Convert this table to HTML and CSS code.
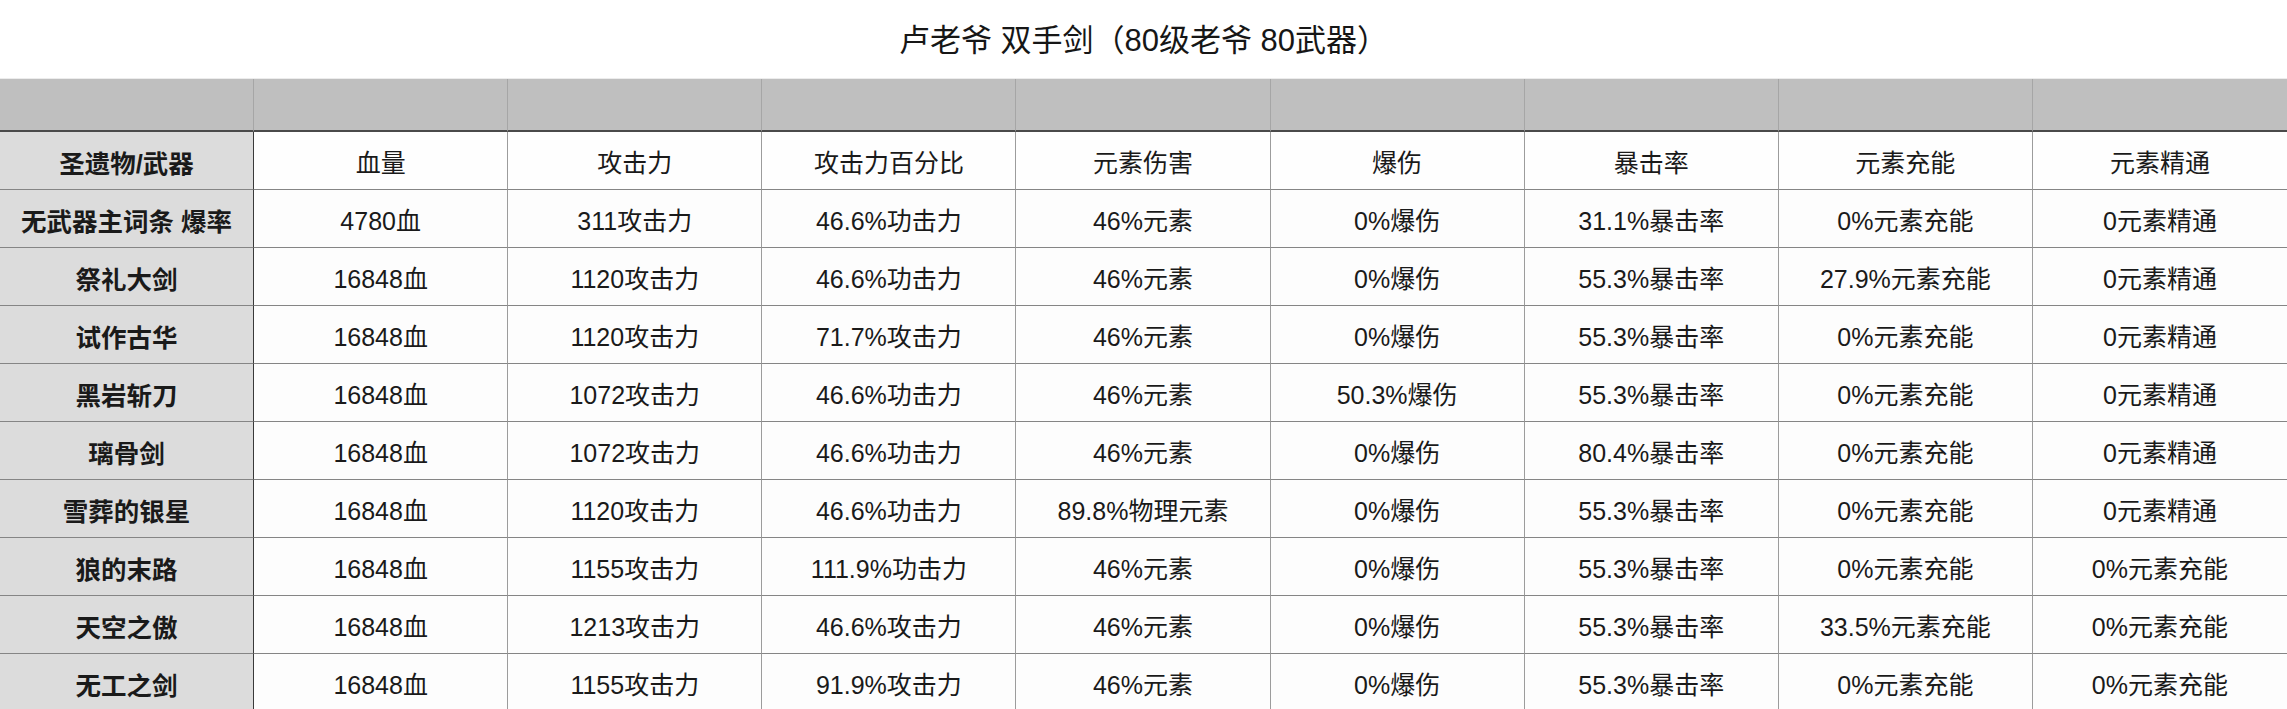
FILE: index.html
```html
<!DOCTYPE html>
<html lang="zh-CN">
<head>
<meta charset="utf-8">
<title>卢老爷 双手剑</title>
<link rel="stylesheet" href="styles.css">
</head>
<body>
<div class="page">
  <h1 class="title">卢老爷 双手剑（80级老爷 80武器）</h1>
  <div class="sheet">
    <div class="cell band first"></div><div class="cell band"></div><div class="cell band"></div><div class="cell band"></div><div class="cell band"></div><div class="cell band"></div><div class="cell band"></div><div class="cell band"></div><div class="cell band last"></div>

    <div class="cell head first">圣遗物/武器</div><div class="cell head">血量</div><div class="cell head">攻击力</div><div class="cell head">攻击力百分比</div><div class="cell head">元素伤害</div><div class="cell head">爆伤</div><div class="cell head">暴击率</div><div class="cell head">元素充能</div><div class="cell head last">元素精通</div>

    <div class="cell first">无武器主词条 爆率</div><div class="cell">4780血</div><div class="cell">311攻击力</div><div class="cell">46.6%功击力</div><div class="cell">46%元素</div><div class="cell">0%爆伤</div><div class="cell">31.1%暴击率</div><div class="cell">0%元素充能</div><div class="cell last">0元素精通</div>

    <div class="cell first">祭礼大剑</div><div class="cell">16848血</div><div class="cell">1120攻击力</div><div class="cell">46.6%功击力</div><div class="cell">46%元素</div><div class="cell">0%爆伤</div><div class="cell">55.3%暴击率</div><div class="cell">27.9%元素充能</div><div class="cell last">0元素精通</div>

    <div class="cell first">试作古华</div><div class="cell">16848血</div><div class="cell">1120攻击力</div><div class="cell">71.7%攻击力</div><div class="cell">46%元素</div><div class="cell">0%爆伤</div><div class="cell">55.3%暴击率</div><div class="cell">0%元素充能</div><div class="cell last">0元素精通</div>

    <div class="cell first">黑岩斩刀</div><div class="cell">16848血</div><div class="cell">1072攻击力</div><div class="cell">46.6%功击力</div><div class="cell">46%元素</div><div class="cell">50.3%爆伤</div><div class="cell">55.3%暴击率</div><div class="cell">0%元素充能</div><div class="cell last">0元素精通</div>

    <div class="cell first">璃骨剑</div><div class="cell">16848血</div><div class="cell">1072攻击力</div><div class="cell">46.6%功击力</div><div class="cell">46%元素</div><div class="cell">0%爆伤</div><div class="cell">80.4%暴击率</div><div class="cell">0%元素充能</div><div class="cell last">0元素精通</div>

    <div class="cell first">雪葬的银星</div><div class="cell">16848血</div><div class="cell">1120攻击力</div><div class="cell">46.6%功击力</div><div class="cell">89.8%物理元素</div><div class="cell">0%爆伤</div><div class="cell">55.3%暴击率</div><div class="cell">0%元素充能</div><div class="cell last">0元素精通</div>

    <div class="cell first">狼的末路</div><div class="cell">16848血</div><div class="cell">1155攻击力</div><div class="cell">111.9%功击力</div><div class="cell">46%元素</div><div class="cell">0%爆伤</div><div class="cell">55.3%暴击率</div><div class="cell">0%元素充能</div><div class="cell last">0%元素充能</div>

    <div class="cell first">天空之傲</div><div class="cell">16848血</div><div class="cell">1213攻击力</div><div class="cell">46.6%攻击力</div><div class="cell">46%元素</div><div class="cell">0%爆伤</div><div class="cell">55.3%暴击率</div><div class="cell">33.5%元素充能</div><div class="cell last">0%元素充能</div>

    <div class="cell first">无工之剑</div><div class="cell">16848血</div><div class="cell">1155攻击力</div><div class="cell">91.9%攻击力</div><div class="cell">46%元素</div><div class="cell">0%爆伤</div><div class="cell">55.3%暴击率</div><div class="cell">0%元素充能</div><div class="cell last">0%元素充能</div>
  </div>
</div>
</body>
</html>
```
FILE: styles.css
```css
html, body {
  margin: 0;
  padding: 0;
  background: #ffffff;
}

body {
  font-family: "Liberation Sans", "Noto Sans CJK SC", sans-serif;
  color: #1a1a1a;
  overflow: hidden;
}

.page {
  width: 2287px;
  height: 709px;
  overflow: hidden;
}

.title {
  margin: 0;
  height: 79px;
  display: flex;
  align-items: center;
  justify-content: center;
  font-size: 31px;
  font-weight: normal;
  color: #161616;
  border-bottom: 1px solid #ececec;
  box-sizing: border-box;
  padding-bottom: 4px;
}

.sheet {
  display: grid;
  grid-template-columns: repeat(9, 1fr);
  grid-template-rows: 53px 58px;
  grid-auto-rows: 58px;
}

.cell {
  box-sizing: border-box;
  display: flex;
  align-items: center;
  justify-content: center;
  font-size: 25px;
  white-space: nowrap;
  background: #fdfdfd;
  border-right: 1px solid #9c9c9c;
  border-bottom: 1px solid #858585;
  padding-top: 1px;
}

.cell.last {
  border-right: none;
}

.cell.band {
  background: #bfbfbf;
  border-right: 1px solid #a6a6a6;
  border-bottom: 2px solid #4a4a4a;
}

.cell.band.last {
  border-right: none;
}

.cell.first {
  background: #dcdcdc;
  font-weight: bold;
  font-size: 25.5px;
  border-right: 1px solid #3a3a3a;
}

.cell.band.first {
  background: #bfbfbf;
  border-right: 1px solid #a6a6a6;
}

.cell.head {
  background: #fefefe;
}

.cell.head.first {
  background: #dcdcdc;
}
```
